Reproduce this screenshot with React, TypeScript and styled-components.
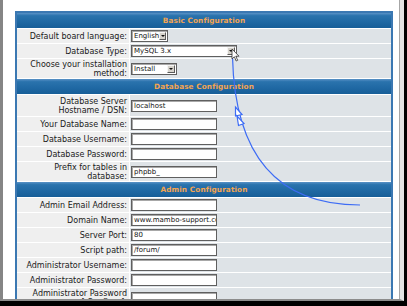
import React from 'react';
import styled, { createGlobalStyle } from 'styled-components';

const GlobalStyle = createGlobalStyle`
  html, body {
    margin: 0;
    padding: 0;
    background: #000;
  }
  * {
    box-sizing: border-box;
  }
`;

type Field =
  | { kind: 'text'; value?: string }
  | { kind: 'select'; value: string; width: number };

interface Row {
  label: string[];
  field: Field;
  h?: number;
}

interface Section {
  title: string;
  rows: Row[];
}

const sections: Section[] = [
  {
    title: 'Basic Configuration',
    rows: [
      { label: ['Default board language:'], field: { kind: 'select', value: 'English', width: 37 } },
      { label: ['Database Type:'], field: { kind: 'select', value: 'MySQL 3.x', width: 106 } },
      {
        label: ['Choose your installation', 'method:'],
        field: { kind: 'select', value: 'Install', width: 46 },
        h: 19,
      },
    ],
  },
  {
    title: 'Database Configuration',
    rows: [
      { label: ['Database Server', 'Hostname / DSN:'], field: { kind: 'text', value: 'localhost' }, h: 21 },
      { label: ['Your Database Name:'], field: { kind: 'text' } },
      { label: ['Database Username:'], field: { kind: 'text' } },
      { label: ['Database Password:'], field: { kind: 'text' } },
      { label: ['Prefix for tables in', 'database:'], field: { kind: 'text', value: 'phpbb_' }, h: 19 },
    ],
  },
  {
    title: 'Admin Configuration',
    rows: [
      { label: ['Admin Email Address:'], field: { kind: 'text' } },
      { label: ['Domain Name:'], field: { kind: 'text', value: 'www.mambo-support.com' } },
      { label: ['Server Port:'], field: { kind: 'text', value: '80' } },
      { label: ['Script path:'], field: { kind: 'text', value: '/forum/' } },
      { label: ['Administrator Username:'], field: { kind: 'text' } },
      { label: ['Administrator Password:'], field: { kind: 'text' } },
      { label: ['Administrator Password', '[ Confirm ]:'], field: { kind: 'text' }, h: 19 },
    ],
  },
];

const Screen = styled.div`
  position: relative;
  width: 407px;
  height: 306px;
  background: #000;
  overflow: hidden;
`;

const Window = styled.div`
  width: 404px;
  height: 301px;
  background: #fff;
  border-left: 3px solid #858585;
  border-right: 4px solid #e4e4e4;
  border-bottom: 2px solid #8c8c8c;
  overflow: hidden;
`;

const Viewport = styled.div`
  height: 100%;
  border-right: 1px solid #a6a6a6;
  padding: 11px 6px 0 12px;
  overflow: hidden;
`;

const Table = styled.div`
  display: grid;
  grid-template-columns: 112px 1fr;
  gap: 1px;
  width: 378px;
  background: #fff;
  border: 2px solid #3b78b2;
  font-family: 'DejaVu Sans', Verdana, sans-serif;
`;

const HeadCell = styled.div`
  grid-column: 1 / -1;
  height: 15px;
  display: flex;
  align-items: center;
  justify-content: center;
  background: linear-gradient(to bottom, #5a92c6 0, #2a73ad 18%, #1f68a3 60%, #175e98 100%);
  color: #f2a451;
  font-weight: bold;
  font-size: 7.3px;
  letter-spacing: 0.1px;
`;

const LabelCell = styled.div<{ $h: number }>`
  height: ${(p) => p.$h}px;
  display: flex;
  flex-direction: column;
  align-items: flex-end;
  justify-content: center;
  padding: 0 2px 0 0;
  background: #efefef;
  color: #1a1a1a;
  font-size: 8px;
  line-height: 9px;
  white-space: nowrap;
  text-align: right;
`;

const FieldCell = styled.div<{ $h: number }>`
  height: ${(p) => p.$h}px;
  display: flex;
  align-items: center;
  padding-left: 1px;
  background: #dee3e7;
`;

const TextBox = styled.div`
  width: 86px;
  height: 12px;
  border: 1px solid #5f5f5f;
  box-shadow: inset 1px 1px 0 #a8a8a8;
  background: #fff;
  padding: 0 0 0 2px;
  font-size: 7px;
  line-height: 10px;
  color: #111;
  white-space: nowrap;
  overflow: hidden;
`;

const SelectBox = styled.div<{ $w: number }>`
  width: ${(p) => p.$w}px;
  height: 12px;
  display: flex;
  align-items: center;
  justify-content: space-between;
  border: 1px solid #5f5f5f;
  box-shadow: inset 1px 1px 0 #a8a8a8;
  background: #fff;
  padding: 0 1px 0 2px;
  font-size: 7px;
  color: #111;
  white-space: nowrap;
`;

const DropButton = styled.span`
  width: 8px;
  height: 8px;
  display: flex;
  align-items: center;
  justify-content: center;
  background: #d6d3cc;
  border: 1px solid;
  border-color: #f4f4f4 #5a5a5a #5a5a5a #f4f4f4;
  &::after {
    content: '';
    border-left: 2px solid transparent;
    border-right: 2px solid transparent;
    border-top: 2px solid #111;
  }
`;

const Overlay = styled.svg`
  position: absolute;
  left: 0;
  top: 0;
  pointer-events: none;
`;

function FieldView({ field }: { field: Field }) {
  if (field.kind === 'select') {
    return (
      <SelectBox $w={field.width}>
        {field.value}
        <DropButton />
      </SelectBox>
    );
  }
  return <TextBox>{field.value}</TextBox>;
}

export default function App() {
  return (
    <Screen>
      <GlobalStyle />
      <Window>
        <Viewport>
          <Table>
            {sections.map((section) => (
              <React.Fragment key={section.title}>
                <HeadCell>{section.title}</HeadCell>
                {section.rows.map((row) => {
                  const h = row.h ?? 14;
                  return (
                    <React.Fragment key={row.label.join(' ')}>
                      <LabelCell $h={h}>
                        {row.label.map((line) => (
                          <span key={line}>{line}</span>
                        ))}
                      </LabelCell>
                      <FieldCell $h={h}>
                        <FieldView field={row.field} />
                      </FieldCell>
                    </React.Fragment>
                  );
                })}
              </React.Fragment>
            ))}
          </Table>
        </Viewport>
      </Window>
      <Overlay width="407" height="306" viewBox="0 0 407 306">
        <path d="M232.5 57 Q236 205 360 205" fill="none" stroke="#3d6cf5" strokeWidth="1.2" />
        <polygon points="235.5,107 235.5,116 242,114.5" fill="#fff" stroke="#3d6cf5" strokeWidth="1.2" />
        <polygon points="237,116 238.5,125.5 244,123.5" fill="#fff" stroke="#3d6cf5" strokeWidth="1.2" />
        <path
          d="M232 49 L232 59 L234.3 56.8 L236.2 61 L237.7 60.3 L235.8 56.2 L239 56.2 Z"
          fill="#fff"
          stroke="#333"
          strokeWidth="0.8"
          strokeLinejoin="round"
        />
      </Overlay>
    </Screen>
  );
}
